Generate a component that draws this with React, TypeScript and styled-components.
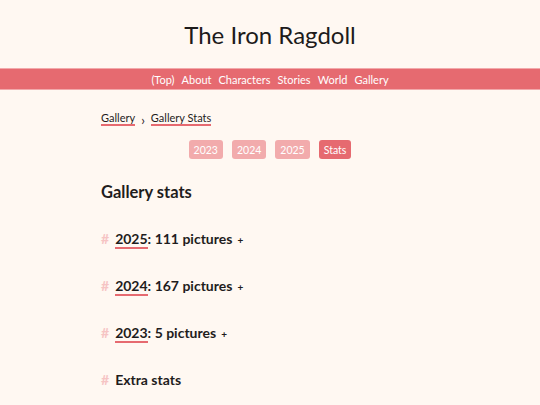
import styled, { createGlobalStyle } from "styled-components";

const GlobalStyle = createGlobalStyle`
  html, body {
    margin: 0;
    padding: 0;
    background: #fff8f2;
    color: #1f1d1d;
    font-family: "Lato", "Noto Sans", sans-serif;
  }
`;

const years = [
  { year: "2025", count: "111 pictures" },
  { year: "2024", count: "167 pictures" },
  { year: "2023", count: "5 pictures" },
];

function App() {
  return (
    <Page>
      <GlobalStyle />
      <Header>
        <h1>The Iron Ragdoll</h1>
      </Header>
      <Nav>
        <a>(Top)</a>
        <a>About</a>
        <a>Characters</a>
        <a>Stories</a>
        <a>World</a>
        <a>Gallery</a>
      </Nav>
      <Main>
        <Crumbs>
          <a>Gallery</a>
          <span className="sep">›</span>
          <a>Gallery Stats</a>
        </Crumbs>
        <Tabs>
          <Tab>2023</Tab>
          <Tab>2024</Tab>
          <Tab>2025</Tab>
          <Tab $active>Stats</Tab>
        </Tabs>
        <Title>Gallery stats</Title>
        {years.map((y) => (
          <Section key={y.year}>
            <span className="hash">#</span>
            <a>{y.year}</a>: {y.count}
            <span className="plus">+</span>
          </Section>
        ))}
        <Section>
          <span className="hash">#</span>
          Extra stats
        </Section>
      </Main>
    </Page>
  );
}

const Page = styled.div`
  min-height: 405px;
`;

const Header = styled.header`
  display: flex;
  justify-content: center;
  padding: 20px 0 0;
  height: 48px;

  h1 {
    margin: 0;
    font-size: 24px;
    font-weight: 400;
    line-height: 30px;
    color: #1d1b1b;
  }
`;

const Nav = styled.nav`
  display: flex;
  justify-content: center;
  gap: 7px;
  height: 20px;
  align-items: center;
  background: #e66a70;
  border-top: 1px solid #f2a9ab;
  border-bottom: 1px solid #f2a9ab;

  a {
    color: #fff;
    font-size: 11px;
  }
`;

const Main = styled.main`
  padding: 19px 101px 0;
`;

const Crumbs = styled.div`
  display: flex;
  align-items: center;
  gap: 6px;
  font-size: 11px;
  height: 18px;

  a {
    border-bottom: 2px solid #e66a70;
    line-height: 13px;
  }

  .sep {
    font-size: 13px;
    margin-top: 3px;
  }
`;

const Tabs = styled.div`
  display: flex;
  justify-content: center;
  gap: 9px;
  margin-top: 13px;
`;

const Tab = styled.span<{ $active?: boolean }>`
  display: inline-flex;
  align-items: center;
  justify-content: center;
  height: 19px;
  padding: 0 5px;
  border-radius: 3px;
  font-size: 10.5px;
  color: #fff;
  background: ${(p) => (p.$active ? "#e66a70" : "#f2abac")};
`;

const Title = styled.h2`
  margin: 22px 0 0;
  font-size: 16.5px;
  font-weight: 700;
  line-height: 22px;
`;

const Section = styled.h3`
  margin: 25px 0 0;
  font-size: 14px;
  font-weight: 700;
  line-height: 22px;

  & + & {
    margin-top: 24px;
  }

  .hash {
    color: #f6c4c4;
    font-weight: 700;
    margin-right: 6px;
  }

  a {
    border-bottom: 2px solid #e66a70;
  }

  .plus {
    font-size: 10px;
    margin-left: 5px;
  }
`;

export default App;
